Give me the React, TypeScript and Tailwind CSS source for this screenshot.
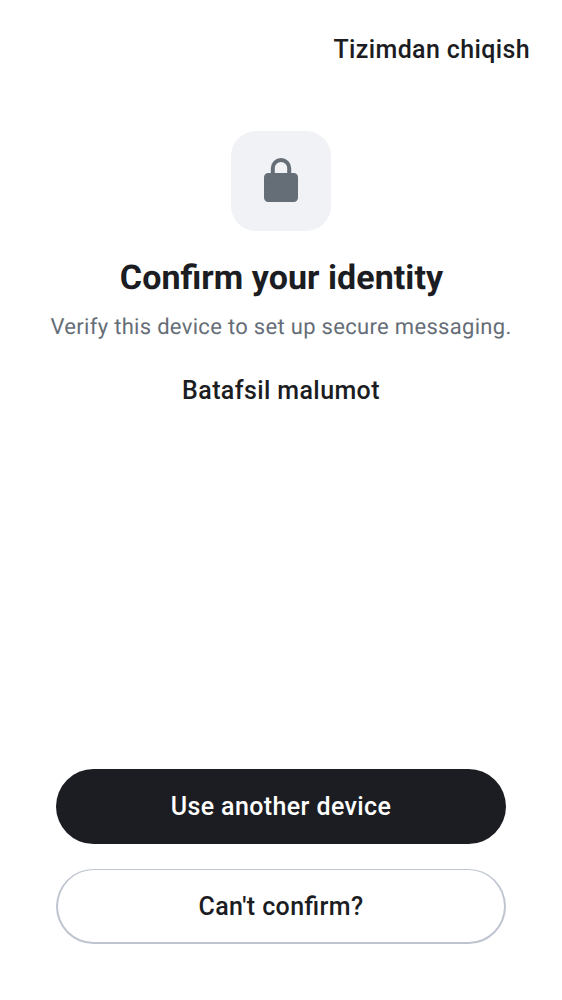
export default function App() {
  return (
    <main className="flex h-[1000px] w-[562px] flex-col items-center bg-white font-['Roboto',sans-serif] text-[#1b1d22] antialiased [font-feature-settings:'liga'_1] [text-rendering:geometricPrecision]">
      <header className="flex h-[100px] w-full items-center justify-end pr-8">
        <button className="text-[25px] leading-[38px] font-medium tracking-[0.37px] whitespace-nowrap">Tizimdan chiqish</button>
      </header>
      <div className="mt-[31px] flex size-[100px] items-center justify-center rounded-[25px] bg-[#f0f2f5] pb-0.5">
        <svg width="34" height="44" viewBox="0 0 34 44" fill="#656d77">
          <path fillRule="evenodd" d="M6.800 15V10.200a10.200 10.200 0 0 1 20.400 0V15h2.600A4.200 4.200 0 0 1 34 19.200v20.600a4.200 4.200 0 0 1-4.200 4.200H4.200A4.200 4.200 0 0 1 0 39.800V19.200A4.200 4.200 0 0 1 4.200 15zM10.800 15h12.400V10.200a6.200 6.200 0 0 0-12.400 0z" />
        </svg>
      </div>
      <h1 className="mt-[26px] pl-px text-[34px] leading-[42px] font-bold tracking-[0.05px] whitespace-nowrap">Confirm your identity</h1>
      <p className="mt-[13px] text-[22px] leading-[32px] tracking-[0.31px] whitespace-nowrap text-[#656d77]">Verify this device to set up secure messaging.</p>
      <button className="mt-7 text-[25px] leading-[38px] font-medium tracking-[0.39px] whitespace-nowrap">Batafsil malumot</button>
      <footer className="mt-auto mb-14 flex w-[450px] flex-col gap-[25px]">
        <button className="h-[75px] rounded-full bg-[#1b1d22] text-[25px] font-medium tracking-[0.39px] text-white">Use another device</button>
        <button className="h-[75px] rounded-full border-2 border-t border-[#bfc5cf] pt-px text-[25px] font-medium tracking-[0.39px]">Can't confirm?</button>
      </footer>
    </main>
  );
}
